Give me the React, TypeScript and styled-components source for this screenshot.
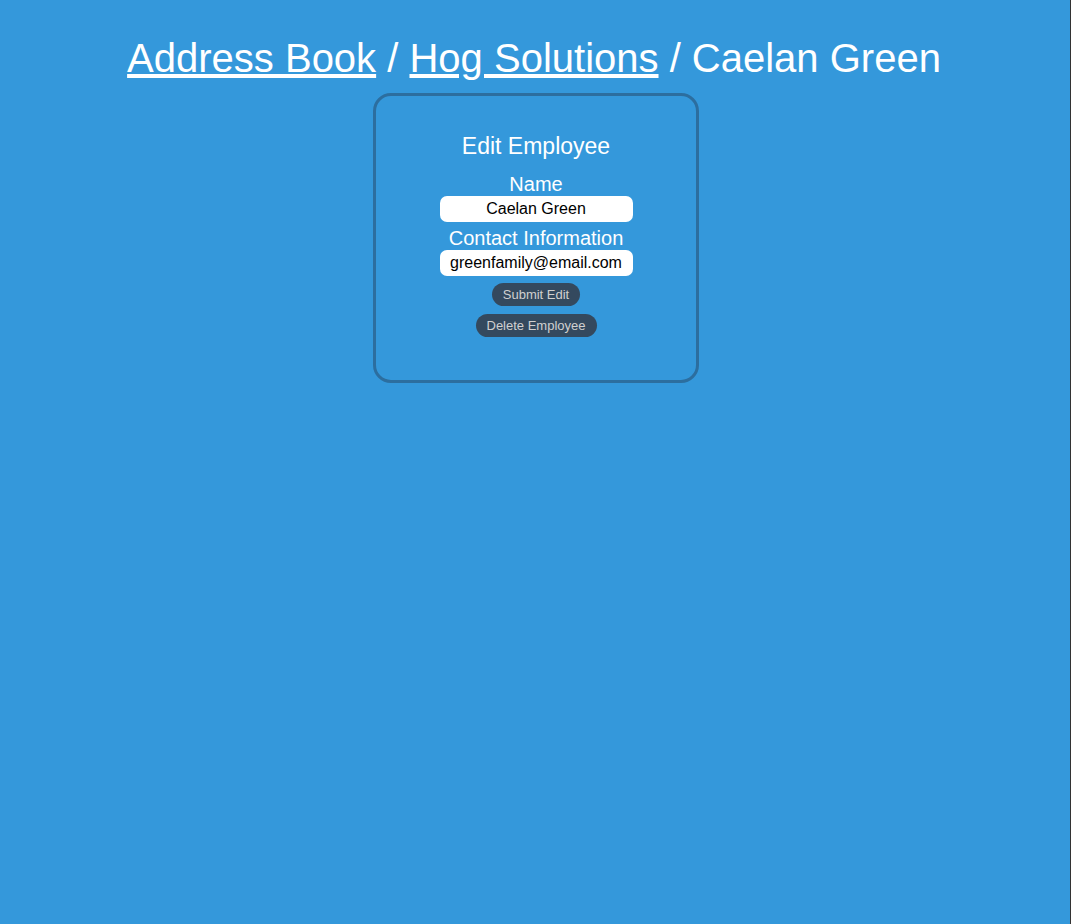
import { createGlobalStyle, styled } from 'styled-components'

const GlobalStyle = createGlobalStyle`
  html, body {
    margin: 0;
    padding: 0;
    background: #3498db;
  }
  body {
    font-family: 'Liberation Sans', Arial, sans-serif;
    color: #fff;
    min-height: 924px;
    border-right: 1px solid #333;
    box-sizing: border-box;
  }
`

export default function App() {
  return (
    <>
      <GlobalStyle />
      <Page>
        <Title>
          <Crumb href="#">Address Book</Crumb> / <Crumb href="#">Hog Solutions</Crumb> / Caelan Green
        </Title>
        <Card>
          <Heading>Edit Employee</Heading>
          <Form>
            <Label htmlFor="name">Name</Label>
            <Input id="name" defaultValue="Caelan Green" />
            <Label htmlFor="contact">Contact Information</Label>
            <Input id="contact" defaultValue="greenfamily@email.com" />
            <Actions>
              <Button type="button">Submit Edit</Button>
              <Button type="button">Delete Employee</Button>
            </Actions>
          </Form>
        </Card>
      </Page>
    </>
  )
}

const Page = styled.div`
  display: flex;
  flex-direction: column;
  align-items: center;
  padding-top: 35px;
`
const Title = styled.h1`
  margin: 0 2px 12px 0;
  font-size: 40px;
  font-weight: 400;
  line-height: 46px;
  color: #fff;
`
const Crumb = styled.a`
  color: #fff;
  text-decoration: underline;
`
const Card = styled.div`
  box-sizing: border-box;
  width: 326px;
  height: 290px;
  margin-left: 2px;
  border: 3px solid #2c6e9f;
  border-radius: 18px;
  padding: 37px 0 0;
  display: flex;
  flex-direction: column;
  align-items: center;
`
const Heading = styled.h2`
  margin: 0 0 13px;
  font-size: 23px;
  font-weight: 400;
  line-height: 26px;
`
const Form = styled.form`
  display: flex;
  flex-direction: column;
  align-items: center;
`
const Label = styled.label`
  font-size: 20px;
  line-height: 24px;
`
const Input = styled.input`
  box-sizing: border-box;
  width: 193px;
  height: 26px;
  border: none;
  border-radius: 7px;
  background: #fff;
  color: #000;
  font-family: 'Liberation Sans', Arial, sans-serif;
  font-size: 16px;
  text-align: center;
  padding: 0;
  margin-bottom: 4px;
  outline: none;
`
const Actions = styled.div`
  display: flex;
  flex-direction: column;
  align-items: center;
  gap: 8px;
  margin-top: 3px;
`
const Button = styled.button`
  height: 23px;
  padding: 0 11px;
  border: none;
  border-radius: 12px;
  background: #34495e;
  color: #d0d0d0;
  font-family: 'Liberation Sans', Arial, sans-serif;
  font-size: 13px;
  cursor: pointer;
`
